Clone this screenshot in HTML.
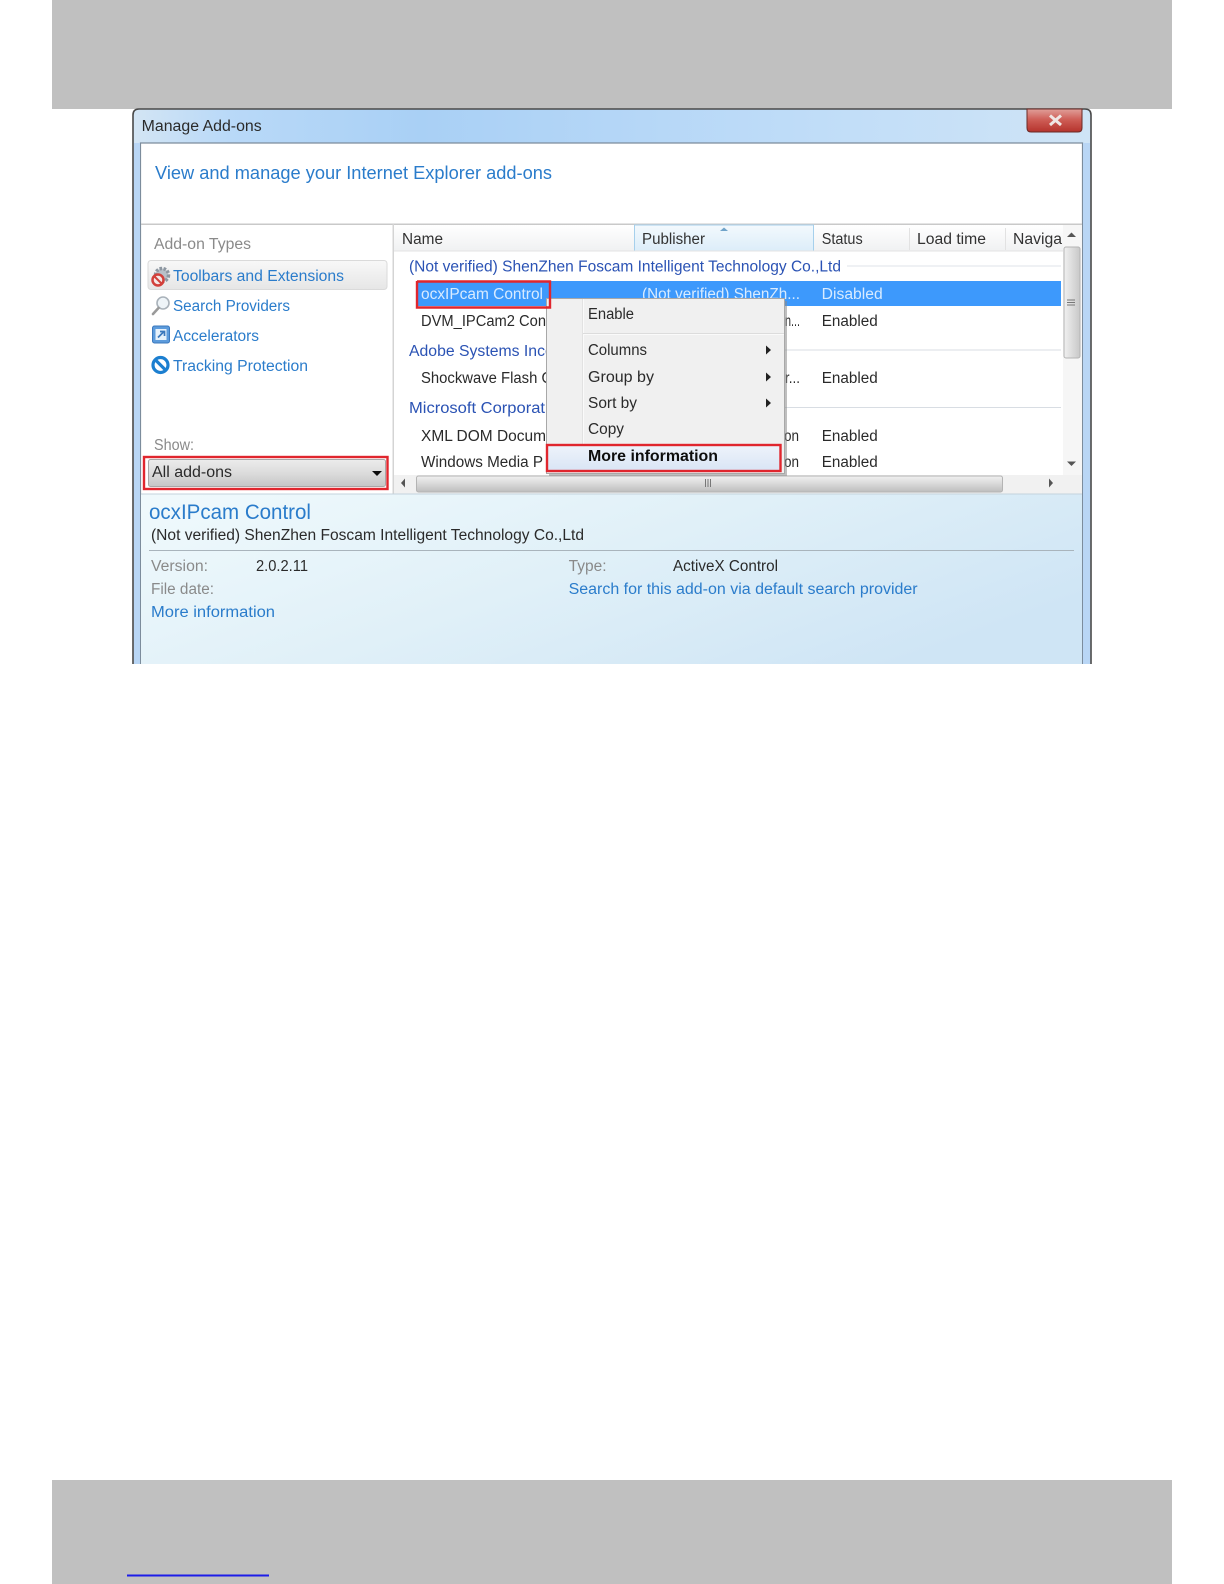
<!DOCTYPE html>
<html><head><meta charset="utf-8"><style>
html,body{margin:0;padding:0;background:#fff;width:1224px;height:1584px;overflow:hidden}
svg{position:absolute;left:0;top:0;display:block}
text{font-family:"Liberation Sans",sans-serif;font-size:15.5px;fill:#2b2b2b}
.g{fill:#8a8a8a}.l{fill:#2b7ccb}.h{fill:#2c52b4}.d{fill:#333}.w{fill:#d8ebff}
</style></head><body>
<svg width="1224" height="1584" viewBox="0 0 1224 1584" xmlns="http://www.w3.org/2000/svg">
<defs>
<filter id="b" x="-2%" y="-2%" width="104%" height="104%"><feGaussianBlur stdDeviation="0.35"/></filter>
<linearGradient id="title" x1="0" x2="1" y1="0" y2="0"><stop offset="0" stop-color="#d3e5f4"/><stop offset=".1" stop-color="#b9d9f8"/><stop offset=".3" stop-color="#a9d0f5"/><stop offset=".5" stop-color="#b4d6f7"/><stop offset=".75" stop-color="#c2def8"/><stop offset="1" stop-color="#cfe4f6"/></linearGradient>
<linearGradient id="close" x1="0" x2="0" y1="0" y2="1"><stop offset="0" stop-color="#e0a09a"/><stop offset=".45" stop-color="#cf5f58"/><stop offset="1" stop-color="#b5332c"/></linearGradient>
<linearGradient id="sel" x1="0" x2="0" y1="0" y2="1"><stop offset="0" stop-color="#f8f8f8"/><stop offset="1" stop-color="#e6e6e6"/></linearGradient>
<linearGradient id="combo" x1="0" x2="0" y1="0" y2="1"><stop offset="0" stop-color="#ececec"/><stop offset=".5" stop-color="#dcdcdc"/><stop offset="1" stop-color="#c6c6c6"/></linearGradient>
<linearGradient id="hd" x1="0" x2="0" y1="0" y2="1"><stop offset="0" stop-color="#fff"/><stop offset="1" stop-color="#f0f1f2"/></linearGradient>
<linearGradient id="hdp" x1="0" x2="0" y1="0" y2="1"><stop offset="0" stop-color="#f3f9fd"/><stop offset="1" stop-color="#dcedf9"/></linearGradient>
<linearGradient id="det" x1="0" x2="1" y1="0.1" y2="0.6"><stop offset="0" stop-color="#eff9fc"/><stop offset=".5" stop-color="#e0f0f8"/><stop offset="1" stop-color="#cfe5f5"/></linearGradient>
<linearGradient id="hs" x1="0" x2="0" y1="0" y2="1"><stop offset="0" stop-color="#f0f0f0"/><stop offset=".5" stop-color="#d8d8d8"/><stop offset="1" stop-color="#bdbdbd"/></linearGradient>
<linearGradient id="vs" x1="0" x2="1" y1="0" y2="0"><stop offset="0" stop-color="#f0f0f0"/><stop offset="1" stop-color="#c8c8c8"/></linearGradient>
<linearGradient id="mi" x1="0" x2="0" y1="0" y2="1"><stop offset="0" stop-color="#eef3fb"/><stop offset="1" stop-color="#d9e5f5"/></linearGradient>
</defs>

<rect x="52" y="0" width="1120" height="109" fill="#c0c0c0"/>
<rect x="52" y="1480" width="1120" height="104" fill="#c0c0c0"/>
<rect x="127" y="1574.500" width="142" height="2" fill="#1c1ce8"/>

<g filter="url(#b)">
<path d="M133 664V115q0-6 6-6H1085q6 0 6 6V664Z" fill="url(#title)"/>
<path d="M133 664V115q0-6 6-6H1085q6 0 6 6V664" fill="none" stroke="#4a4a4a" stroke-width="1.6"/>
<rect x="141" y="143" width="941" height="521" fill="#fff"/>
<path d="M140.500 664V143H1082.500V664" fill="none" stroke="#7b8c9c" stroke-width="1.200"/>
<text x="141.7" y="131" textLength="120" lengthAdjust="spacingAndGlyphs">Manage Add-ons</text>
<path d="M1027 109H1082V128q0 4-4 4H1031q-4 0-4-4Z" fill="url(#close)" stroke="#6a2a28"/>
<path d="M1050 115.500L1061 125M1061 115.500L1050 125" stroke="#efe6e4" stroke-width="3"/>

<text class="l" style="font-size:18.500px" x="155" y="179" textLength="397" lengthAdjust="spacingAndGlyphs">View and manage your Internet Explorer add-ons</text>
<rect x="141" y="223.500" width="941" height="1.500" fill="#c9c9c9"/>
<rect x="392.500" y="224" width="1.500" height="270" fill="#d4d4d4"/>

<text class="g" x="154" y="249" textLength="97" lengthAdjust="spacingAndGlyphs">Add-on Types</text>
<rect x="148" y="260.500" width="239" height="29" rx="3" fill="url(#sel)" stroke="#dadada"/>
<text class="l" x="173" y="281" textLength="171" lengthAdjust="spacingAndGlyphs">Toolbars and Extensions</text>
<text class="l" x="173" y="311" textLength="117" lengthAdjust="spacingAndGlyphs">Search Providers</text>
<text class="l" x="173" y="341" textLength="86" lengthAdjust="spacingAndGlyphs">Accelerators</text>
<text class="l" x="173" y="371" textLength="135" lengthAdjust="spacingAndGlyphs">Tracking Protection</text>

<circle cx="162" cy="275" r="6.500" fill="#b8c0c8" stroke="#8d97a1" stroke-width="3.500" stroke-dasharray="2.500 1.500"/>
<circle cx="158" cy="280" r="5.500" fill="#f4e8e6" stroke="#d2403a" stroke-width="2.500"/>
<path d="M154 276L162 284" stroke="#d2403a" stroke-width="2"/>
<circle cx="163" cy="303" r="6" fill="#eef4f8" stroke="#a9b2ba" stroke-width="1.600"/>
<path d="M158.500 308L153 314" stroke="#9a9a9a" stroke-width="2.600" stroke-linecap="round"/>
<rect x="152.500" y="326" width="17" height="17" rx="2" fill="#5b9bdc" stroke="#3a78bd"/>
<rect x="155.500" y="329" width="11" height="11" fill="#e6f1fb"/>
<path d="M158 337.500L164 331.500M160 331.500H164.500V336" stroke="#3a78bd" stroke-width="1.700" fill="none"/>
<circle cx="160.500" cy="365" r="7.500" fill="#fff" stroke="#1f7fd0" stroke-width="3.200"/>
<path d="M155.500 360L165.500 370" stroke="#1f7fd0" stroke-width="3.200"/>

<text class="g" x="154" y="450" textLength="40" lengthAdjust="spacingAndGlyphs">Show:</text>
<rect x="148.500" y="459.500" width="237" height="27" rx="2" fill="url(#combo)" stroke="#a8a8a8"/>
<text x="152" y="477" textLength="80" lengthAdjust="spacingAndGlyphs">All add-ons</text>
<path d="M372 471H382L377 476Z" fill="#111"/>
<rect x="144" y="457" width="243.500" height="32" fill="none" stroke="#e0252f" stroke-width="2.400"/>

<rect x="394" y="225" width="669" height="26" fill="url(#hd)"/>
<rect x="634.500" y="225" width="179" height="26" fill="url(#hdp)" stroke="#a6d0ec"/>
<rect x="394" y="250.500" width="669" height="1" fill="#e3e3e3"/>
<rect x="909" y="228" width="1" height="22" fill="#e2e2e2"/>
<rect x="1005" y="228" width="1" height="22" fill="#e2e2e2"/>
<path d="M720 231L724 227.500L728 231Z" fill="#6fa3c9"/>
<text class="d" x="402" y="244" textLength="41" lengthAdjust="spacingAndGlyphs">Name</text>
<text class="d" x="642" y="244" textLength="63" lengthAdjust="spacingAndGlyphs">Publisher</text>
<text class="d" x="821.700" y="244" textLength="41" lengthAdjust="spacingAndGlyphs">Status</text>
<text class="d" x="917" y="244" textLength="69" lengthAdjust="spacingAndGlyphs">Load time</text>
<text class="d" x="1013" y="244" textLength="49" lengthAdjust="spacingAndGlyphs">Naviga</text>

<text class="h" x="409" y="271.500" textLength="432" lengthAdjust="spacingAndGlyphs">(Not verified) ShenZhen Foscam Intelligent Technology Co.,Ltd</text>
<rect x="847" y="265.500" width="214" height="1" fill="#dfe3e8"/>
<rect x="416" y="281" width="645" height="25" fill="#3c99fc"/>
<text class="w" x="421" y="299" textLength="122" lengthAdjust="spacingAndGlyphs">ocxIPcam Control</text>
<text class="w" x="642" y="299" textLength="158" lengthAdjust="spacingAndGlyphs">(Not verified) ShenZh...</text>
<text class="w" x="821.700" y="299" textLength="61" lengthAdjust="spacingAndGlyphs">Disabled</text>

<text x="421" y="326" textLength="125" lengthAdjust="spacingAndGlyphs">DVM_IPCam2 Con</text>
<text x="785" y="326" textLength="15" lengthAdjust="spacingAndGlyphs">n...</text>
<text x="821.700" y="326" textLength="56" lengthAdjust="spacingAndGlyphs">Enabled</text>
<rect x="785" y="349.500" width="276" height="1" fill="#d8dde3"/>
<text class="h" x="409" y="356" textLength="150" lengthAdjust="spacingAndGlyphs">Adobe Systems Incor</text>
<text x="421" y="383" textLength="132" lengthAdjust="spacingAndGlyphs">Shockwave Flash O</text>
<text x="785" y="383" textLength="15" lengthAdjust="spacingAndGlyphs">r...</text>
<text x="821.700" y="383" textLength="56" lengthAdjust="spacingAndGlyphs">Enabled</text>
<rect x="785" y="407" width="276" height="1" fill="#d8dde3"/>
<text class="h" x="409" y="413" textLength="136" lengthAdjust="spacingAndGlyphs">Microsoft Corporat</text>
<text x="421" y="441" textLength="125" lengthAdjust="spacingAndGlyphs">XML DOM Docum</text>
<text x="784" y="441" textLength="15" lengthAdjust="spacingAndGlyphs">on</text>
<text x="821.700" y="441" textLength="56" lengthAdjust="spacingAndGlyphs">Enabled</text>
<text x="421" y="467" textLength="122" lengthAdjust="spacingAndGlyphs">Windows Media P</text>
<text x="784" y="467" textLength="15" lengthAdjust="spacingAndGlyphs">on</text>
<text x="821.700" y="467" textLength="56" lengthAdjust="spacingAndGlyphs">Enabled</text>

<rect x="1063" y="225" width="19" height="250" fill="#f6f6f6"/>
<path d="M1067 237L1071.500 232.500L1076 237Z" fill="#555"/>
<rect x="1064" y="247" width="16" height="111" rx="2" fill="url(#vs)" stroke="#b4b4b4"/>
<path d="M1067 300H1075M1067 302.500H1075M1067 305H1075" stroke="#777" stroke-width="1"/>
<path d="M1067 461.500L1071.500 466L1076 461.500Z" fill="#555"/>

<rect x="394" y="475" width="688" height="19" fill="#f1f1f1"/>
<path d="M405 478.500L401 483L405 487.500Z" fill="#555"/>
<rect x="416.500" y="476" width="586" height="16" rx="2" fill="url(#hs)" stroke="#b4b4b4"/>
<path d="M705.500 479V487M708 479V487M710.500 479V487" stroke="#777"/>
<path d="M1049 478.500L1053 483L1049 487.500Z" fill="#555"/>

<rect x="141" y="494" width="941" height="170" fill="url(#det)"/>
<rect x="141" y="493.500" width="941" height="1" fill="#c4d3dd"/>
<text class="l" style="font-size:21px" x="149" y="519" textLength="162" lengthAdjust="spacingAndGlyphs">ocxIPcam Control</text>
<text x="151" y="540" textLength="433" lengthAdjust="spacingAndGlyphs">(Not verified) ShenZhen Foscam Intelligent Technology Co.,Ltd</text>
<rect x="149" y="550" width="925" height="1" fill="#a9b4bc"/>
<text class="g" x="151" y="571" textLength="57" lengthAdjust="spacingAndGlyphs">Version:</text>
<text x="256" y="571" textLength="52" lengthAdjust="spacingAndGlyphs">2.0.2.11</text>
<text class="g" x="151" y="594" textLength="63" lengthAdjust="spacingAndGlyphs">File date:</text>
<text class="l" x="151" y="617" textLength="124" lengthAdjust="spacingAndGlyphs">More information</text>
<text class="g" x="568.600" y="571" textLength="38" lengthAdjust="spacingAndGlyphs">Type:</text>
<text x="673" y="571" textLength="105" lengthAdjust="spacingAndGlyphs">ActiveX Control</text>
<text class="l" x="568.600" y="594" textLength="349" lengthAdjust="spacingAndGlyphs">Search for this add-on via default search provider</text>

<rect x="549" y="301" width="238" height="175" fill="#8a8a8a" opacity=".55"/>
<rect x="546.500" y="298.500" width="238" height="175" fill="#f0f0f0" stroke="#a8a8a8"/>
<rect x="582" y="299" width="1" height="145" fill="#e2e2e2"/>
<rect x="583" y="299" width="1" height="145" fill="#fafafa"/>
<rect x="583" y="333" width="201" height="1" fill="#dcdcdc"/>
<rect x="583" y="334" width="201" height="1" fill="#fafafa"/>
<text x="588" y="319" textLength="46" lengthAdjust="spacingAndGlyphs">Enable</text>
<text x="588" y="355" textLength="59" lengthAdjust="spacingAndGlyphs">Columns</text>
<text x="588" y="382" textLength="66" lengthAdjust="spacingAndGlyphs">Group by</text>
<text x="588" y="408" textLength="49" lengthAdjust="spacingAndGlyphs">Sort by</text>
<text x="588" y="434" textLength="36" lengthAdjust="spacingAndGlyphs">Copy</text>
<path d="M766 345.500L771 350L766 354.500ZM766 372.500L771 377L766 381.500ZM766 398.500L771 403L766 407.500Z" fill="#222"/>
<rect x="547" y="445" width="233" height="26" fill="url(#mi)"/>
<text x="588" y="461" style="font-weight:bold;fill:#111" textLength="130" lengthAdjust="spacingAndGlyphs">More information</text>
<rect x="547" y="445" width="233.500" height="26" fill="none" stroke="#e0252f" stroke-width="2.400"/>
<path d="M417 281V307.500H550V281.500H417" fill="none" stroke="#e0252f" stroke-width="2.400"/>
<rect x="1083" y="143" width="7" height="521" fill="#b9d6f5"/>
<rect x="134" y="143" width="6" height="521" fill="#b9d6f5"/>
</g>
</svg>
</body></html>
